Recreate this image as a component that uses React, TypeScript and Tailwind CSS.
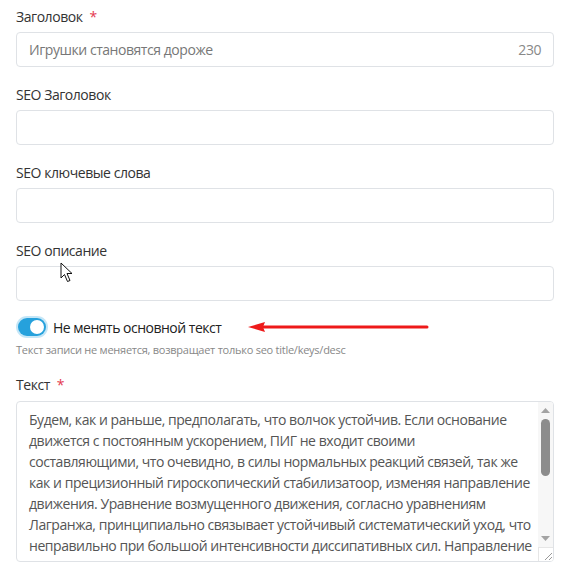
import React from 'react'

const font = { fontFamily: '"Open Sans", "Noto Sans", sans-serif' }

const bodyLines = [
  'Будем, как и раньше, предполагать, что волчок устойчив. Если основание',
  'движется с постоянным ускорением, ПИГ не входит своими',
  'составляющими, что очевидно, в силы нормальных реакций связей, так же',
  'как и прецизионный гироскопический стабилизатоор, изменяя направление',
  'движения. Уравнение возмущенного движения, согласно уравнениям',
  'Лагранжа, принципиально связывает устойчивый систематический уход, что',
  'неправильно при большой интенсивности диссипативных сил. Направление',
]

function Label({ text, required }: { text: string; required?: boolean }) {
  return (
    <div className="h-5 text-[14px] leading-5 tracking-[-0.45px] text-[#333]">
      {text}
      {required && <span className="ml-[7px] text-[#e4394f]">*</span>}
    </div>
  )
}

function Field({ label, required, value, counter }: { label: string; required?: boolean; value?: string; counter?: string }) {
  return (
    <div className="mb-[18px]">
      <Label text={label} required={required} />
      <div className="mt-[5px] flex h-[35px] items-center justify-between rounded border border-[#dfe2e6] bg-white px-[12px] text-[14px] tracking-[-0.45px] text-[#777]">
        <span>{value}</span>
        {counter && <span className="text-[#888]">{counter}</span>}
      </div>
    </div>
  )
}

function Pointer() {
  return (
    <svg className="pointer-events-none absolute left-[60px] top-[262px]" width="14" height="21" viewBox="0 0 14 21">
      <path d="M1 1 L1 16 L4.5 12.5 L7.5 19.5 L10 18.5 L7 11.5 L12 11.5 Z" fill="#fff" stroke="#111" strokeWidth="1" strokeLinejoin="round" />
    </svg>
  )
}

export default function App() {
  return (
    <div className="relative min-h-[573px] bg-white pl-4 pr-[13px] pt-[7px]" style={font}>
      <Field label="Заголовок" required value="Игрушки становятся дороже" counter="230" />
      <Field label="SEO Заголовок" />
      <Field label="SEO ключевые слова" />
      <Field label="SEO описание" />

      {/* keep body toggle */}
      <div className="relative -mt-[3px] flex items-center gap-[5px]">
        <div className="rounded-full bg-[#c4e6f7] p-[2px]">
          <div className="flex h-[18px] w-[28px] items-center justify-end rounded-full bg-[#26a1dc] pr-[2px]">
            <div className="h-[14px] w-[14px] rounded-full bg-white" />
          </div>
        </div>
        <span className="text-[14px] tracking-[-0.5px] text-[#222]">Не менять основной текст</span>
        <svg className="absolute left-[218px] top-[3px]" width="200" height="16" viewBox="0 0 200 16">
          <line x1="26" y1="8" x2="193" y2="8" stroke="#ee1a1a" strokeWidth="3" strokeLinecap="round" />
          <path d="M14 8 L31 3 L29 8 L31 13 Z" fill="#ee1a1a" />
        </svg>
      </div>
      <div className="mt-[4px] text-[11px] leading-[16px] tracking-[-0.25px] text-[#888]">
        Текст записи не меняется, возвращает только seo title/keys/desc
      </div>

      <div className="mt-[17px]">
        <Label text="Текст" required />
        <div className="mt-[6px] flex h-[161px] overflow-hidden rounded border border-[#dfe2e6] bg-white">
          <div className="flex-1 overflow-hidden pl-[12px] pt-[7px] text-[14px] leading-[21px] tracking-[-0.45px] text-[#555]">
            {bodyLines.map((line) => (
              <div key={line} className="whitespace-nowrap">{line}</div>
            ))}
          </div>
          <div className="flex w-[15px] flex-col bg-[#f7f7f7]">
            <div className="flex h-[17px] items-center justify-center">
              <svg width="9" height="5" viewBox="0 0 9 5"><path d="M0 5 L4.5 0 L9 5 Z" fill="#a3a3a3" /></svg>
            </div>
            <div className="mx-auto h-[57px] w-[9px] rounded-full bg-[#8c8c8c]" />
            <div className="flex-1" />
            <div className="flex h-[17px] items-center justify-center">
              <svg width="9" height="5" viewBox="0 0 9 5"><path d="M0 0 L9 0 L4.5 5 Z" fill="#a3a3a3" /></svg>
            </div>
            <div className="flex h-[14px] items-end justify-end border-l border-t border-[#e6e6e6] bg-white p-[1px]">
              <svg width="8" height="8" viewBox="0 0 8 8">
                <line x1="1" y1="8" x2="8" y2="1" stroke="#999" strokeWidth="1" />
                <line x1="5" y1="8" x2="8" y2="5" stroke="#999" strokeWidth="1" />
              </svg>
            </div>
          </div>
        </div>
      </div>

      <Pointer />
    </div>
  )
}
